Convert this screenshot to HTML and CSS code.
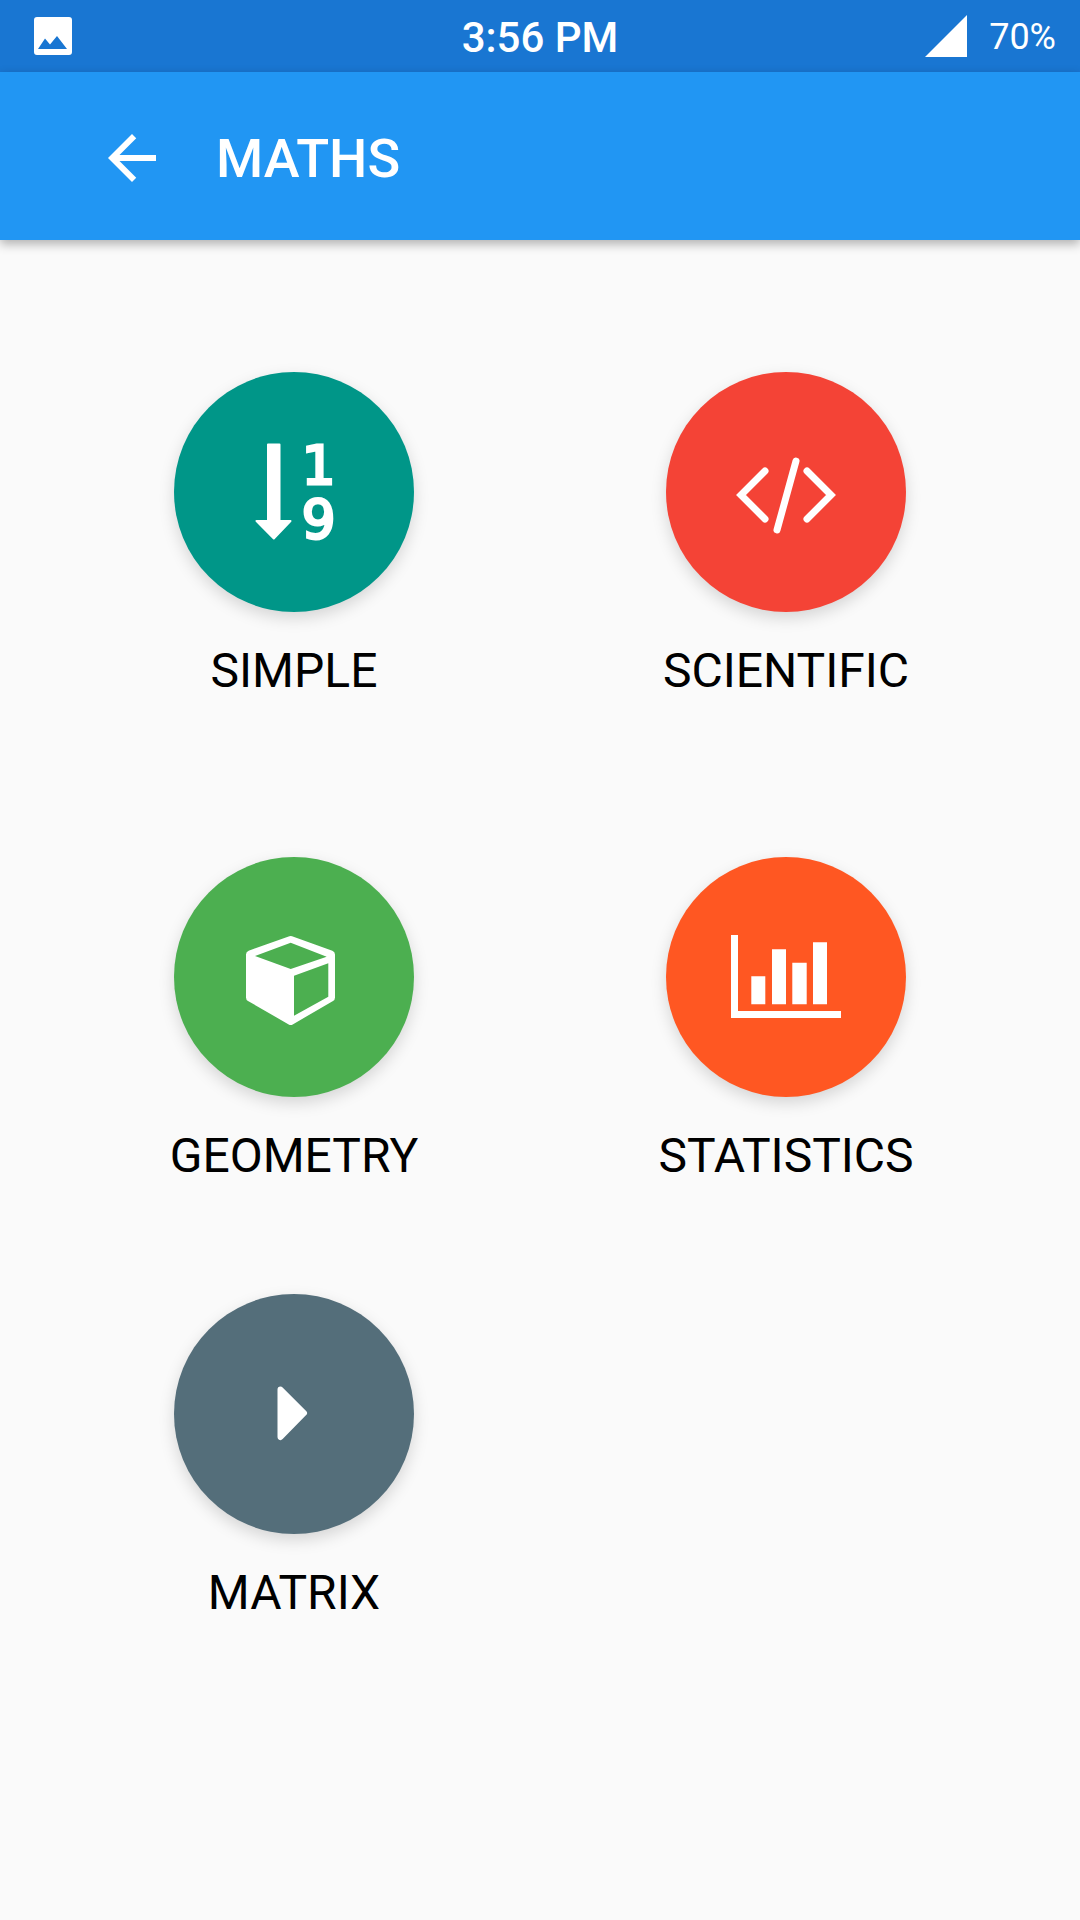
FILE: index.html
```html
<!DOCTYPE html>
<html lang="en">
<head>
    <meta charset="UTF-8">
    <title>Maths</title>
    <link rel="stylesheet" href="styles.css">
</head>
<body>
    <div class="container">
        <div class="status-bar">
            <svg class="status-image" width="38" height="38" viewBox="0 0 38 38">
                <path fill-rule="evenodd" d="M3 0H35A3 3 0 0 1 38 3V35A3 3 0 0 1 35 38H3A3 3 0 0 1 0 35V3A3 3 0 0 1 3 0ZM4 32H33L23 19L16 27.500L11 21.500Z"/>
            </svg>
            <span class="status-time">3:56 PM</span>
            <div class="status-right">
                <svg class="status-signal" width="42" height="42" viewBox="0 0 42 42">
                    <polygon points="42,0 42,42 0,42"/>
                </svg>
                <span class="status-battery">70%</span>
            </div>
        </div>

        <div class="header">
            <svg class="back-icon" width="72" height="72" viewBox="0 0 24 24">
                <path d="M20 11H7.830l5.590-5.590L12 4l-8 8 8 8 1.410-1.410L7.830 13H20v-2z"/>
            </svg>
            <span class="header-title">MATHS</span>
        </div>

        <div class="menu">
            <div class="menu-item">
                <div class="circle teal">
                    <svg class="circle-icon" width="240" height="240" viewBox="0 0 240 240">
                        <path class="icon-fill icon-soft" d="M94 72.500H105.500V149H116.500L99.800 166.500L82.500 149H94Z"/>
                        <text class="icon-digit"><tspan x="144.500" y="111.500">1</tspan><tspan x="144.500" y="166">9</tspan></text>
                    </svg>
                </div>
                <span class="menu-label">SIMPLE</span>
            </div>
            <div class="menu-item">
                <div class="circle red">
                    <svg class="circle-icon" width="240" height="240" viewBox="0 0 240 240">
                        <path class="icon-line" d="M99 99L75 123L99 147M141 99L165 123L141 147M130 89L111 158"/>
                    </svg>
                </div>
                <span class="menu-label">SCIENTIFIC</span>
            </div>
            <div class="menu-item">
                <div class="circle green">
                    <svg class="circle-icon" width="240" height="240" viewBox="0 0 240 240">
                        <path class="icon-fill icon-rounded" d="M116.700 83L157 97.500V140.500L116.700 164L76 140.500V97.500Z"/>
                        <path class="icon-face" d="M116.700 85.700L81 99L116.700 112L152.700 99.700ZM120 118.700V158.700L154.300 139.700V106.300Z"/>
                    </svg>
                </div>
                <span class="menu-label">GEOMETRY</span>
            </div>
            <div class="menu-item">
                <div class="circle orange">
                    <svg class="circle-icon" width="240" height="240" viewBox="0 0 240 240">
                        <path class="icon-fill" d="M65 78H72V154H175V161H65ZM85.300 119.300H99.300V147.300H85.300ZM106 92.300H120V147.300H106ZM126.300 105.700H140.700V147.300H126.300ZM147 85.300H161V147.300H147Z"/>
                    </svg>
                </div>
                <span class="menu-label">STATISTICS</span>
            </div>
            <div class="menu-item">
                <div class="circle slate">
                    <svg class="circle-icon" width="240" height="240" viewBox="0 0 240 240">
                        <path class="icon-fill icon-rounded icon-play" d="M106.500 95.500L130 119L106.500 143Z"/>
                    </svg>
                </div>
                <span class="menu-label">MATRIX</span>
            </div>
        </div>
    </div>
</body>
</html>
```

FILE: styles.css
```css
body {
    margin: 0;
    font-family: Roboto, "Liberation Sans", sans-serif;
    background-color: #FAFAFA;
}
.container {
    width: 1080px;
    height: 1920px;
    overflow: hidden;
    background-color: #FAFAFA;
}
.status-bar {
    height: 72px;
    background-color: #1976D2;
    display: grid;
    grid-template-columns: 1fr auto 1fr;
    align-items: center;
    padding: 0 24px;
    color: #FFFFFF;
}
.status-bar svg {
    fill: #FFFFFF;
    display: block;
}
.status-image {
    margin-left: 10px;
}
.status-time {
    font-size: 42px;
    font-weight: 500;
    padding-top: 2px;
}
.status-right {
    display: flex;
    align-items: center;
    justify-content: flex-end;
    gap: 22px;
}
.status-battery {
    font-size: 36px;
    padding-top: 2px;
}
.header {
    height: 168px;
    box-sizing: border-box;
    background-color: #2196F3;
    display: flex;
    align-items: center;
    padding: 4px 0 0 96px;
    gap: 48px;
    position: relative;
    box-shadow: 0 4px 10px rgba(0, 0, 0, 0.3);
}
.back-icon {
    fill: #FFFFFF;
}
.header-title {
    font-size: 54px;
    font-weight: 500;
    color: #FFFFFF;
}
.menu {
    display: grid;
    grid-template-columns: 492px 492px;
    grid-template-rows: 485px 437px auto;
    padding: 132px 48px 0;
}
.menu-item {
    display: flex;
    flex-direction: column;
    align-items: center;
}
.circle {
    width: 240px;
    height: 240px;
    border-radius: 50%;
    box-shadow: 0 6px 16px rgba(0, 0, 0, 0.15);
}
.circle-icon {
    display: block;
}
.teal {
    background-color: #009688;
}
.red {
    background-color: #F44336;
}
.green {
    background-color: #4CAF50;
}
.orange {
    background-color: #FF5722;
}
.slate {
    background-color: #546E7A;
}
.icon-fill {
    fill: #FFFFFF;
}
.icon-soft {
    stroke: #FFFFFF;
    stroke-width: 2;
    stroke-linejoin: round;
}
.icon-rounded {
    stroke: #FFFFFF;
    stroke-width: 8;
    stroke-linejoin: round;
}
.icon-play {
    stroke-width: 6;
}
.icon-face {
    fill: #4CAF50;
}
.icon-line {
    fill: none;
    stroke: #FFFFFF;
    stroke-width: 7;
    stroke-linecap: round;
}
.icon-digit {
    font-family: "DejaVu Sans", sans-serif;
    font-size: 53px;
    fill: #FFFFFF;
    stroke: #FFFFFF;
    stroke-width: 3;
    text-anchor: middle;
}
.menu-label {
    margin-top: 31px;
    font-size: 48px;
    line-height: 56px;
    color: #000000;
}
```
